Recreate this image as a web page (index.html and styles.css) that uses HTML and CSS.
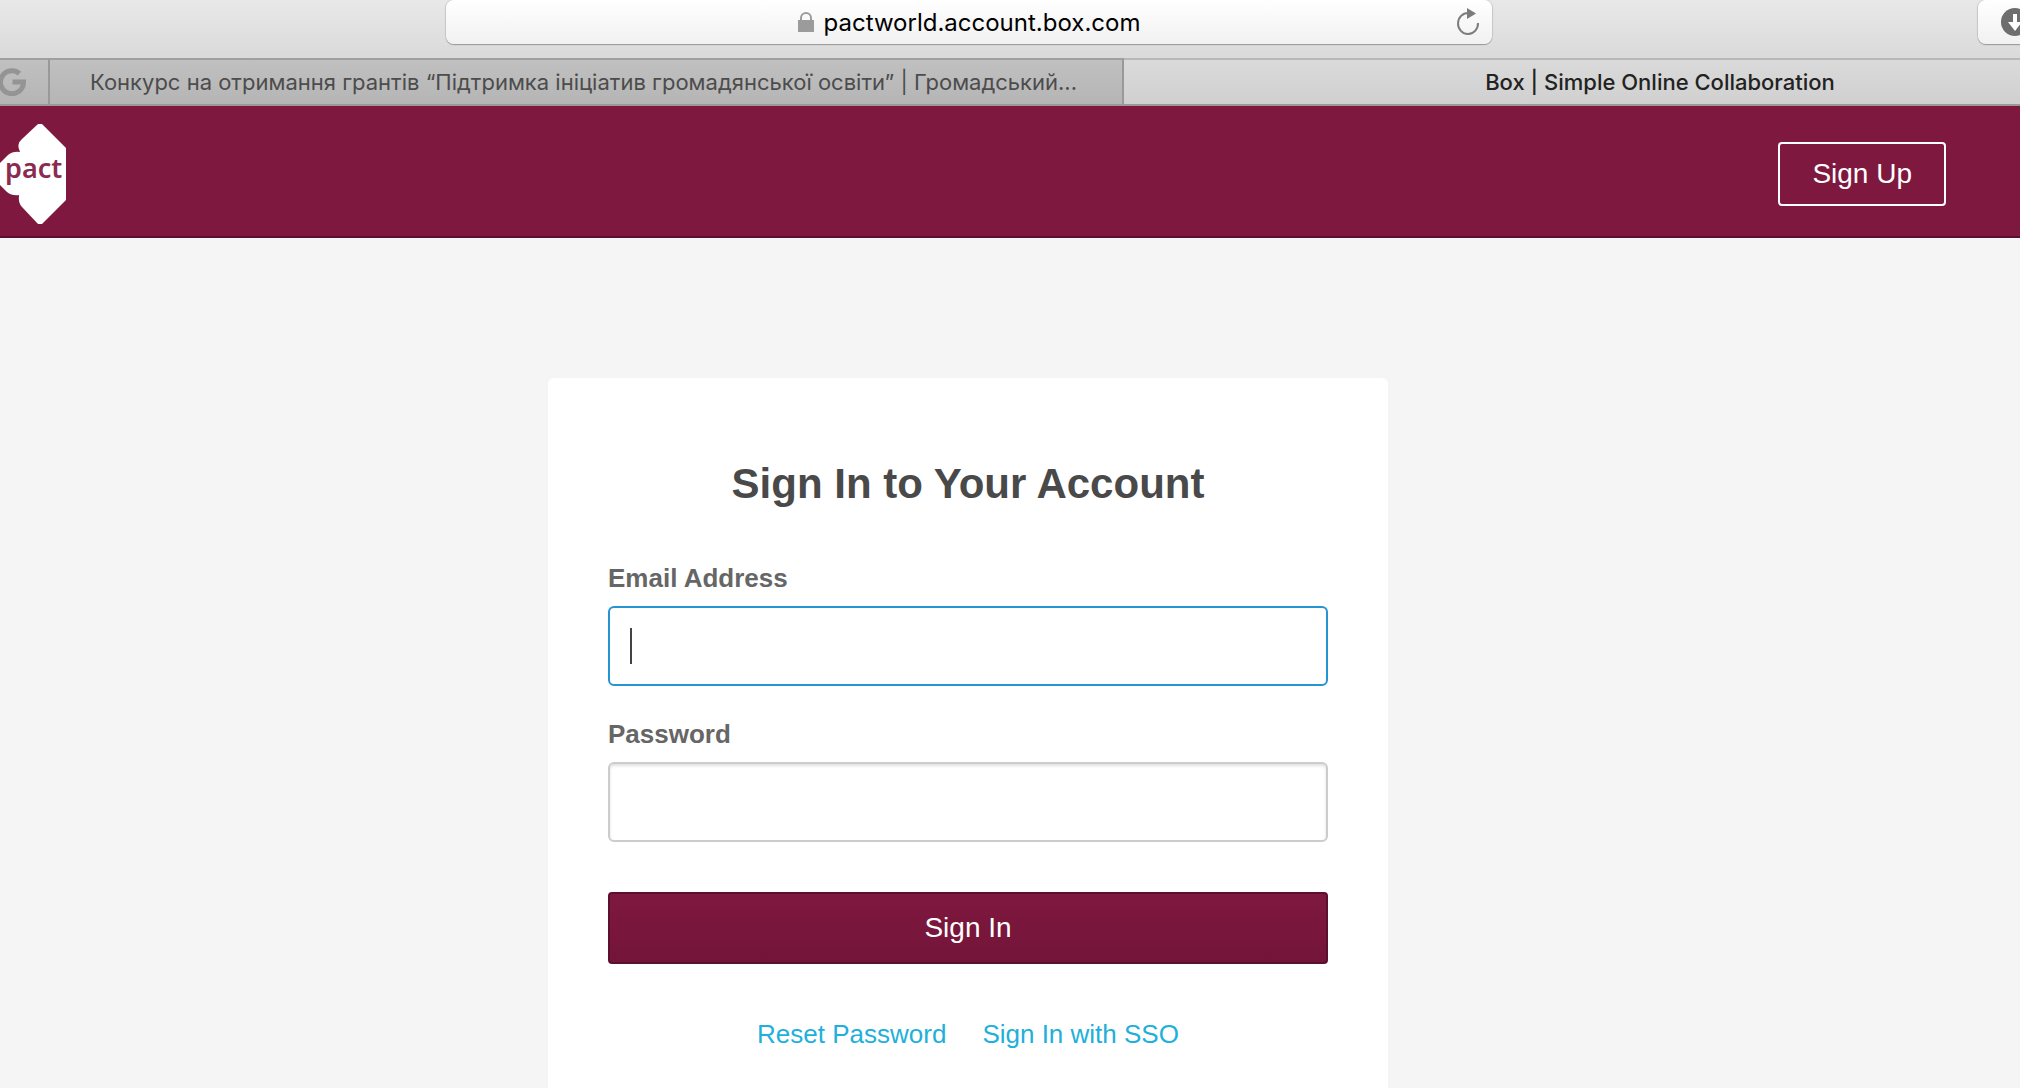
FILE: index.html
```html
<!DOCTYPE html>
<html lang="en">
<head>
  <meta charset="utf-8">
  <title>Box | Simple Online Collaboration</title>
  <link rel="stylesheet" href="styles.css">
</head>
<body>
  <!-- Browser toolbar -->
  <div class="toolbar">
    <div class="address-bar">
      <div class="address">
        <svg class="lock-icon" width="16" height="20" viewBox="0 0 16 20" aria-hidden="true">
          <path d="M3 9V6a5 5 0 0 1 10 0v3" fill="none" stroke="#9b9b9b" stroke-width="2"/>
          <rect x="0" y="8" width="16" height="12" fill="#9b9b9b"/>
        </svg>
        <span>pactworld.account.box.com</span>
      </div>
      <button class="reload-btn" type="button" aria-label="Reload">
        <svg width="24" height="28" viewBox="0 0 24 28">
          <path d="M12 5A10 10.500 0 1 0 22 15" fill="none" stroke="#7c7c7c" stroke-width="2"/>
          <path d="M11 0l9 5.500-9 5.500z" fill="#7c7c7c"/>
        </svg>
      </button>
    </div>
    <button class="download-btn" type="button" aria-label="Downloads">
      <svg width="28" height="28" viewBox="0 0 28 28">
        <circle cx="14" cy="14" r="14" fill="#6e6e6e"/>
        <path d="M12 6h4v8h5l-7 9-7-9h5z" fill="#fff"/>
      </svg>
    </button>
  </div>

  <!-- Tabs -->
  <div class="tabs">
    <div class="tab tab-pinned">
      <svg width="26" height="28" viewBox="0 0 26 28" aria-hidden="true">
        <path d="M19.500 5.500A11.500 11.500 0 1 0 23.500 14H12.500" fill="none" stroke="#949494" stroke-width="5"/>
      </svg>
    </div>
    <div class="tab tab-background">Конкурс на отримання грантів “Підтримка ініціатив громадянської освіти” | Громадський...</div>
    <div class="tab tab-active">Box | Simple Online Collaboration</div>
  </div>

  <!-- Site header -->
  <header class="header">
    <svg class="logo" width="66" height="100" viewBox="0 0 66 100" role="img" aria-label="pact">
      <path d="M38 0h4l24 24v52l-24 24h-4L22 83q-4-4-3-12-7 1-12-3L0 61V39l8-8q5-4 12-3-4-8 2-13z" fill="#fff"/>
      <text class="logo-text" x="5" y="54">pact</text>
    </svg>
    <button class="sign-up-btn" type="button">Sign Up</button>
  </header>

  <!-- Login form -->
  <main class="main">
    <form class="card">
      <h1 class="title">Sign In to Your Account</h1>
      <label class="label" for="email">Email Address</label>
      <input class="input input-active" type="email" id="email">
      <label class="label" for="password">Password</label>
      <input class="input" type="password" id="password">
      <button class="sign-in-btn" type="button">Sign In</button>
      <div class="links">
        <a href="#">Reset Password</a>
        <a href="#">Sign In with SSO</a>
      </div>
    </form>
  </main>
</body>
</html>
```
FILE: styles.css
```css
* {
  box-sizing: border-box;
}

body {
  margin: 0;
  min-height: 100vh;
  display: flex;
  flex-direction: column;
  overflow: hidden;
  background: #f5f5f5;
  font-family: "Liberation Sans", Arial, sans-serif;
}

button {
  font-family: inherit;
  cursor: pointer;
}

/* Browser toolbar */
.toolbar {
  display: flex;
  justify-content: space-between;
  height: 58px;
  padding-left: 446px;
  background: linear-gradient(#e8e8e8, #dadada);
  font-family: Inter, sans-serif;
}

.address-bar {
  display: flex;
  align-items: center;
  width: 1046px;
  height: 44px;
  padding-right: 12px;
  background: linear-gradient(#fff, #f1f1f1);
  border-radius: 8px;
  box-shadow: 0 1px 1px #999, 0 0 1px 1px #ccc;
}

.address {
  display: flex;
  flex: 1;
  align-items: center;
  justify-content: center;
  gap: 10px;
  padding-left: 36px;
  font-size: 24px;
  color: #000;
}

.reload-btn {
  display: flex;
  padding: 0;
  border: none;
  background: none;
}

.download-btn {
  display: flex;
  align-items: center;
  width: 42px;
  height: 44px;
  padding: 0 0 0 23px;
  border: none;
  border-radius: 8px 0 0 8px;
  background: linear-gradient(#fff, #f1f1f1);
  box-shadow: 0 1px 1px #999, 0 0 1px 1px #ccc;
  overflow: hidden;
}

.download-btn svg {
  flex-shrink: 0;
}

/* Tabs */
.tabs {
  display: flex;
  height: 48px;
  overflow: hidden;
  border-bottom: 2px solid #999;
  font-family: Inter, sans-serif;
  font-size: 22px;
  font-weight: 500;
}

.tab {
  flex-shrink: 0;
  display: flex;
  align-items: center;
  white-space: nowrap;
  border-top: 2px solid #a0a0a0;
  border-right: 2px solid #999;
  background: linear-gradient(#c0c0c0, #b5b5b5);
}

.tab-pinned {
  width: 50px;
}

.tab-background {
  width: 1074px;
  padding: 0 40px;
  font-weight: 400;
  color: #4c4c4c;
}

.tab-active {
  width: 1074px;
  justify-content: center;
  border-top-color: #b8b8b8;
  background: linear-gradient(#dadada, #d0d0d0);
  color: #222;
}

/* Site header */
.header {
  display: flex;
  align-items: center;
  justify-content: space-between;
  padding: 18px 74px 12px 0;
  background: #7e183e;
  border-bottom: 2px solid #5c102d;
}

.logo-text {
  font-family: "Noto Sans", sans-serif;
  font-size: 27px;
  font-weight: 600;
  fill: #8a2b4f;
}

.sign-up-btn {
  height: 64px;
  padding: 0 32px;
  border: 2px solid #fff;
  border-radius: 4px;
  background: none;
  color: #fff;
  font-size: 28px;
}

/* Login form */
.main {
  flex: 1;
  display: flex;
  justify-content: center;
  padding: 140px 84px 0 0;
}

.card {
  width: 840px;
  padding: 80px 60px 20px;
  background: #fff;
  border-radius: 6px 6px 0 0;
}

.title {
  margin: 0 0 48px;
  font-size: 42px;
  line-height: 52px;
  text-align: center;
  color: #494949;
}

.label {
  display: block;
  margin-bottom: 8px;
  font-size: 26px;
  font-weight: bold;
  line-height: 40px;
  color: #666;
}

.input {
  display: block;
  width: 100%;
  height: 80px;
  margin-bottom: 28px;
  padding: 0 20px;
  border: 2px solid #ccc;
  border-radius: 6px;
  background: #fff;
  box-shadow: inset 0 2px 3px rgba(0, 0, 0, 0.12);
  font-size: 28px;
  outline: none;
}

/* Active field with its text cursor */
.input-active {
  border-color: #2693d2;
  background: linear-gradient(#444, #444) no-repeat 20px center / 2px 36px #fff;
  box-shadow: none;
}

.sign-in-btn {
  width: 100%;
  height: 72px;
  margin-top: 22px;
  border: 2px solid #5c102d;
  border-radius: 4px;
  background: linear-gradient(#7e183e, #741439);
  color: #fff;
  font-size: 28px;
}

.links {
  display: flex;
  justify-content: center;
  gap: 36px;
  margin-top: 50px;
  font-size: 26px;
  line-height: 40px;
}

.links a {
  color: #21b0da;
  text-decoration: none;
}
```
